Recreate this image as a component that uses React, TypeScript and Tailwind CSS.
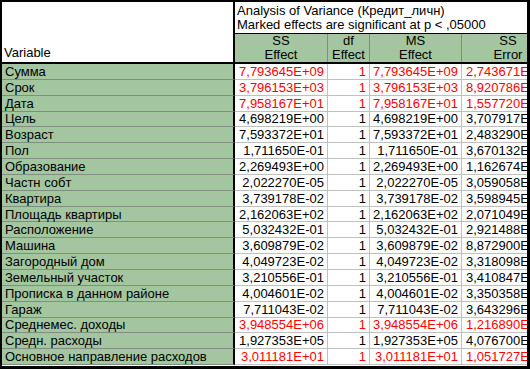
import React from "react";

type Row = {
  name: string;
  ss: string;
  ms: string;
  err: string;
  sig?: boolean;
};

const rows: Row[] = [
  { name: "Сумма", ss: "7,793645E+09", ms: "7,793645E+09", err: "2,743671E", sig: true },
  { name: "Срок", ss: "3,796153E+03", ms: "3,796153E+03", err: "8,920786E", sig: true },
  { name: "Дата", ss: "7,958167E+01", ms: "7,958167E+01", err: "1,557720E", sig: true },
  { name: "Цель", ss: "4,698219E+00", ms: "4,698219E+00", err: "3,707917E" },
  { name: "Возраст", ss: "7,593372E+01", ms: "7,593372E+01", err: "2,483290E" },
  { name: "Пол", ss: "1,711650E-01", ms: "1,711650E-01", err: "3,670132E" },
  { name: "Образование", ss: "2,269493E+00", ms: "2,269493E+00", err: "1,162674E" },
  { name: "Частн собт", ss: "2,022270E-05", ms: "2,022270E-05", err: "3,059058E" },
  { name: "Квартира", ss: "3,739178E-02", ms: "3,739178E-02", err: "3,598945E" },
  { name: "Площадь квартиры", ss: "2,162063E+02", ms: "2,162063E+02", err: "2,071049E" },
  { name: "Расположение", ss: "5,032432E-01", ms: "5,032432E-01", err: "2,921488E" },
  { name: "Машина", ss: "3,609879E-02", ms: "3,609879E-02", err: "8,872900E" },
  { name: "Загородный дом", ss: "4,049723E-02", ms: "4,049723E-02", err: "3,318098E" },
  { name: "Земельный участок", ss: "3,210556E-01", ms: "3,210556E-01", err: "3,410847E" },
  { name: "Прописка в данном районе", ss: "4,004601E-02", ms: "4,004601E-02", err: "3,350358E" },
  { name: "Гараж", ss: "7,711043E-02", ms: "7,711043E-02", err: "3,643296E" },
  { name: "Среднемес. доходы", ss: "3,948554E+06", ms: "3,948554E+06", err: "1,216890E", sig: true },
  { name: "Средн. расходы", ss: "1,927353E+05", ms: "1,927353E+05", err: "4,076700E" },
  { name: "Основное направление расходов", ss: "3,011181E+01", ms: "3,011181E+01", err: "1,051727E", sig: true },
];

const HeadCell: React.FC<{ top: string; bottom: string; w: string; last?: boolean }> = ({ top, bottom, w, last }) => (
  <div
    className={`${w} shrink-0 h-full bg-[#a3c6a1] flex flex-col items-center justify-center leading-[14px] ${
      last ? "" : "border-r border-[#7f8f7f]"
    }`}
  >
    <span>{top}</span>
    <span>{bottom}</span>
  </div>
);

const App: React.FC = () => {
  return (
    <div className="w-[530px] h-[369px] overflow-hidden bg-white border-l-2 border-t-2 border-r-[3px] border-b-[3px] border-black font-['Liberation_Sans',Arial,sans-serif] text-[13px] text-black leading-none">
      <div className="flex h-[62px] border-b-2 border-black">
        <div className="w-[233px] shrink-0 border-r-2 border-black flex items-end pl-[2px] pb-[3px]">
          Variable
        </div>
        <div className="flex-1 flex flex-col min-w-0">
          <div className="h-[32px] border-b border-black pl-[2px] pt-[2px] leading-[14px] whitespace-nowrap">
            <div>Analysis of Variance (Кредит_личн)</div>
            <div>Marked effects are significant at p &lt; ,05000</div>
          </div>
          <div className="flex flex-1">
            <HeadCell top="SS" bottom="Effect" w="w-[93px]" />
            <HeadCell top="df" bottom="Effect" w="w-[42px]" />
            <HeadCell top="MS" bottom="Effect" w="w-[92px]" />
            <HeadCell top="SS" bottom="Error" w="w-[92px]" last />
          </div>
        </div>
      </div>
      {rows.map((r) => {
        const color = r.sig ? "text-[#ff0000]" : "text-black";
        return (
          <div key={r.name} className="flex h-[15.85px]">
            <div className="w-[233px] shrink-0 bg-[#a3c6a1] border-b border-[#7f8f7f] border-r-2 border-r-black pl-[3px] flex items-center whitespace-nowrap">
              {r.name}
            </div>
            <div className={`w-[93px] shrink-0 border-r border-b border-[#c0c0c0] flex items-center justify-end pr-[3px] ${color}`}>
              {r.ss}
            </div>
            <div className={`w-[42px] shrink-0 border-r border-b border-[#c0c0c0] flex items-center justify-end pr-[3px] ${color}`}>
              1
            </div>
            <div className={`w-[92px] shrink-0 border-r border-b border-[#c0c0c0] flex items-center justify-end pr-[3px] ${color}`}>
              {r.ms}
            </div>
            <div className={`w-[92px] shrink-0 border-b border-[#c0c0c0] flex items-center pl-[4px] whitespace-nowrap ${color}`}>
              {r.err}
            </div>
          </div>
        );
      })}
    </div>
  );
};

export default App;
